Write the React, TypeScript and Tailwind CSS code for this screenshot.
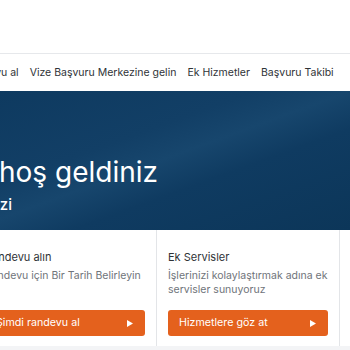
const navItems = ["Randevu al", "Vize Başvuru Merkezine gelin", "Ek Hizmetler", "Başvuru Takibi"];

const cards = [
  { title: "Randevu alın", text: "Randevu için Bir Tarih Belirleyin", action: "Şimdi randevu al" },
  { title: "Ek Servisler", text: "İşlerinizi kolaylaştırmak adına ek servisler sunuyoruz", action: "Hizmetlere göz at" },
  { title: "Başvuru Takibi", text: "Başvurunuzun durumunu takip edin", action: "Takip et" },
];

export default function App() {
  return (
    <div className="h-[350px] w-[350px] overflow-hidden bg-[#f3f4f6] font-['Inter','Liberation_Sans',sans-serif]">
      <div className="h-[54px] border-b border-[#e6e8eb] bg-white" />
      <nav className="flex h-[37px] items-center overflow-hidden bg-white">
        <div className="ml-[-36px] mt-[1px] flex shrink-0 items-center gap-[11px] whitespace-nowrap text-[10.5px] text-[#2f3337]">
          {navItems.map((item) => (
            <span key={item}>{item}</span>
          ))}
        </div>
      </nav>
      <section className="relative h-[139px] overflow-hidden bg-[#0e3a60]">
        <div className="absolute inset-0 bg-[linear-gradient(160deg,#0e3a60_0%,#123f66_35%,#17466d_48%,#0f3b61_62%,#0c3659_100%)]" />
        <div className="relative pt-[63px] text-white">
          <h1 className="ml-[-342px] w-[500px] whitespace-nowrap text-right text-[28px] leading-[36px] font-normal">
            Vize Başvuru Merkezine hoş geldiniz
          </h1>
          <p className="ml-[-288px] mt-[4px] w-[300px] whitespace-nowrap text-right text-[15px] leading-[22px] font-medium">
            Vize Başvuru Merkezi
          </p>
        </div>
      </section>
      <div className="ml-[-26px] grid w-[549px] grid-cols-3 bg-white">
        {cards.map((card) => (
          <div key={card.title} className="flex h-[116px] flex-col border-r border-[#e3e5e8] px-[11px] pt-[19px] pb-[10px]">
            <h3 className="text-[11px] leading-[16px] text-[#2f3337]">{card.title}</h3>
            <p className="mt-[4px] text-[10.5px] leading-[14px] text-[#6f747a]">{card.text}</p>
            <button className="mt-auto flex h-[26px] w-full items-center justify-between rounded-[3px] bg-[#e4611d] pl-[11px] pr-[12px] text-[10.7px] text-white">
              <span>{card.action}</span>
              <svg width="6" height="7" viewBox="0 0 6 7" fill="white">
                <path d="M0 0 L6 3.5 L0 7 Z" />
              </svg>
            </button>
          </div>
        ))}
      </div>
    </div>
  );
}
